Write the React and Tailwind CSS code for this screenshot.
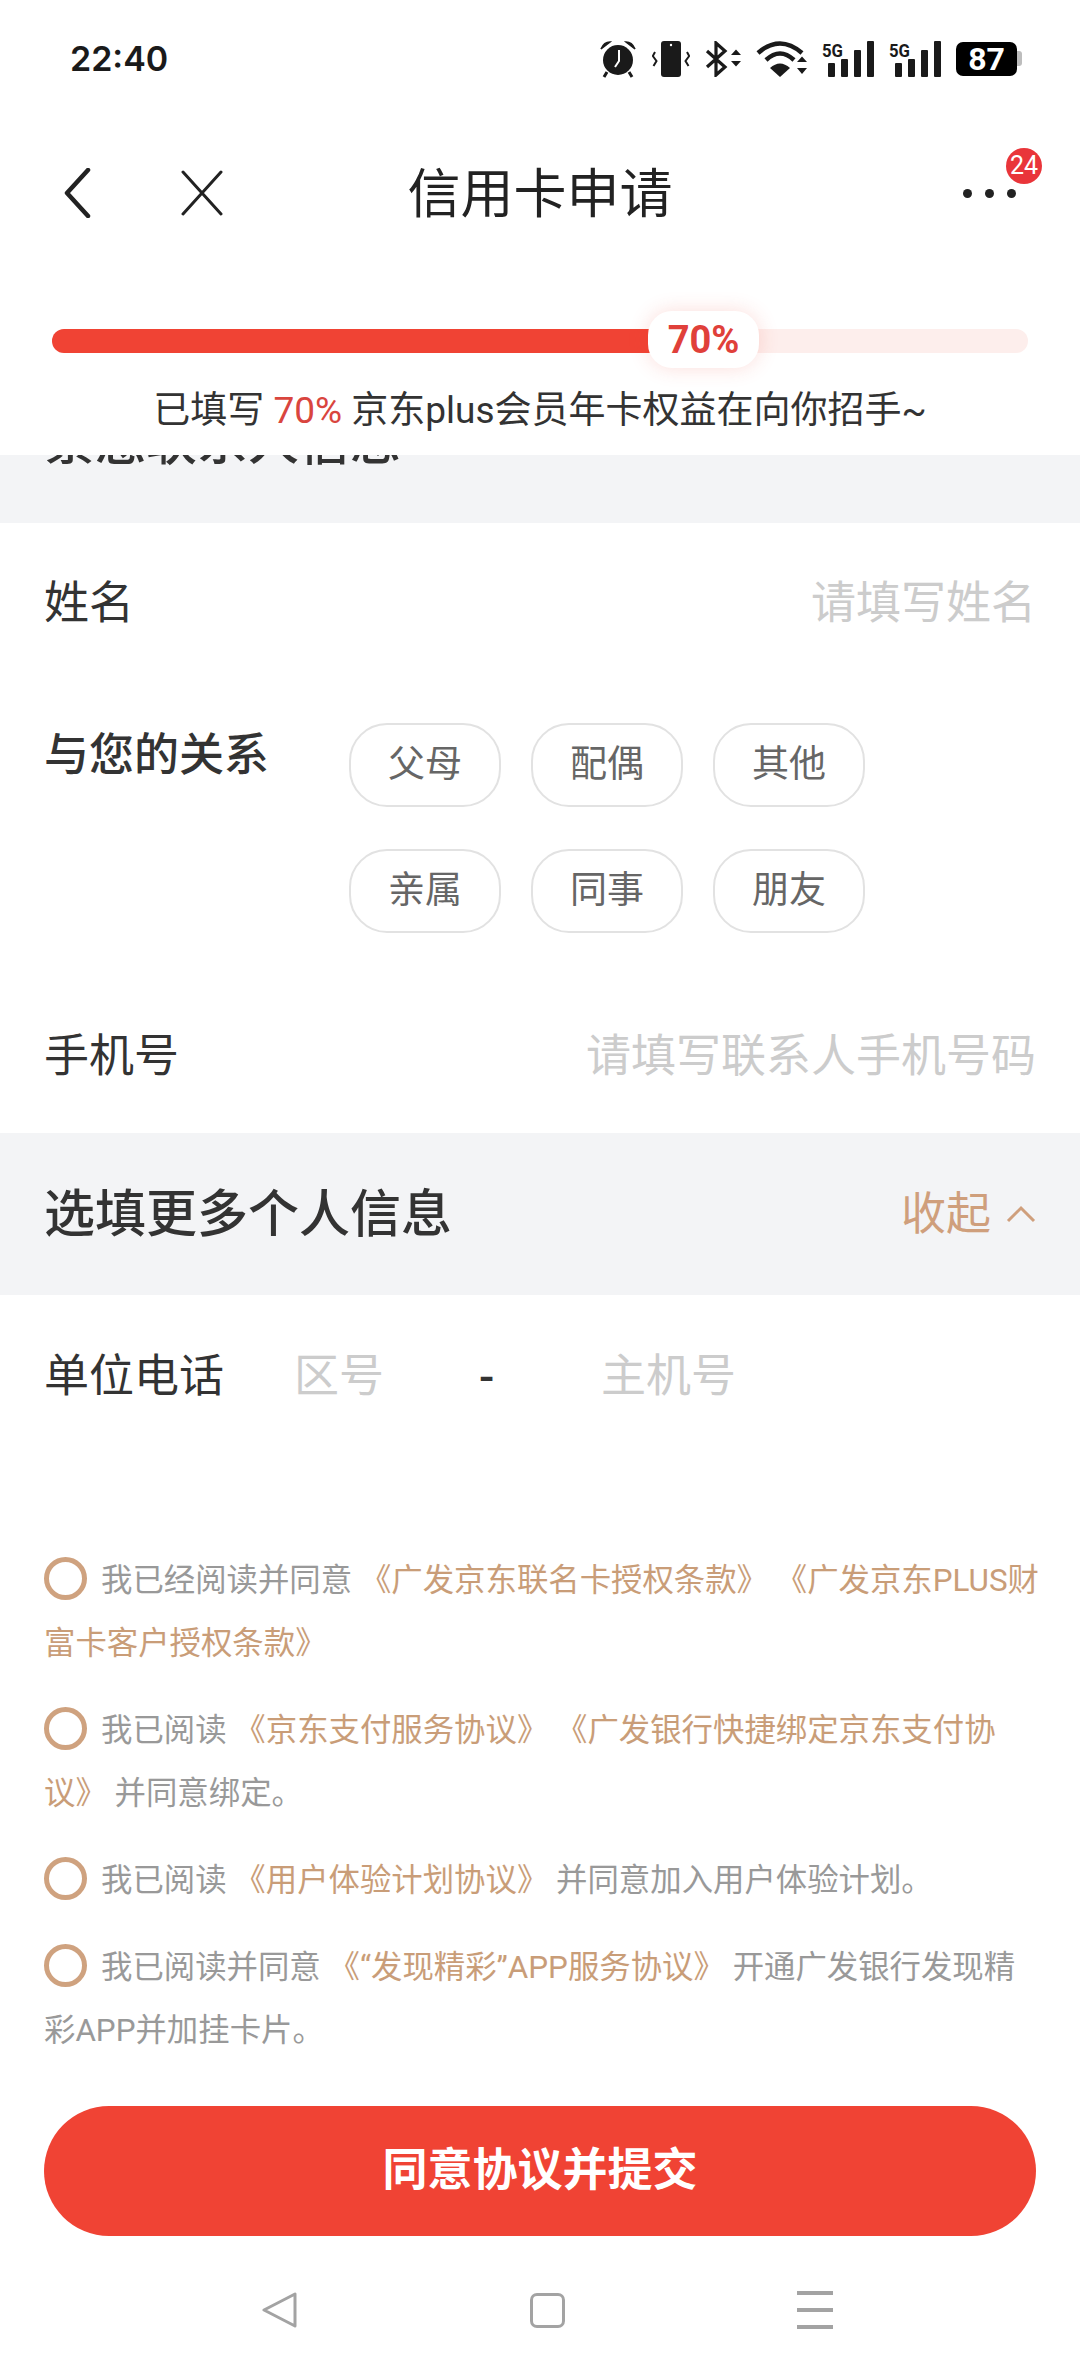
import React from "react";

const relations = ["父母", "配偶", "其他", "亲属", "同事", "朋友"];

function SignalIcon() {
  return (
    <svg width="52" height="36" viewBox="0 0 52 36" className="shrink-0">
      <text x="0" y="16" fontSize="18" fontWeight="700" fill="#1a1a1a" fontFamily="Roboto, sans-serif" textLength="21" lengthAdjust="spacingAndGlyphs">5G</text>
      <rect x="6" y="22" width="7" height="14" rx="1" fill="#1a1a1a" />
      <rect x="19" y="18" width="7" height="18" rx="1" fill="#1a1a1a" />
      <rect x="32" y="9" width="7" height="27" rx="1" fill="#1a1a1a" />
      <rect x="45" y="0" width="7" height="36" rx="1" fill="#1a1a1a" />
    </svg>
  );
}

function StatusBar() {
  return (
    <div className="h-[116px] pt-[1px] pl-[70px] pr-[58px] flex items-center justify-between">
      <span className="text-[34px] font-semibold leading-none text-[#1a1a1a] font-['Inter',sans-serif]">22:40</span>
      <div className="flex items-center gap-[15px]">
        <svg width="38" height="38" viewBox="0 0 38 38">
          <circle cx="19" cy="20" r="15" fill="#1a1a1a" />
          <path d="M2 9 Q5 2 11 2 Z M36 9 Q33 2 27 2 Z" fill="#1a1a1a" stroke="#1a1a1a" strokeWidth="1.5" />
          <path d="M8 32 L5 37 M30 32 L33 37" stroke="#1a1a1a" strokeWidth="3" />
          <path d="M20 10 V21 L16 27" stroke="#fff" strokeWidth="2" fill="none" />
        </svg>
        <svg width="38" height="36" viewBox="0 0 38 36">
          <rect x="9" y="0" width="20" height="36" rx="3" fill="#1a1a1a" />
          <circle cx="19" cy="4" r="1.2" fill="#fff" />
          <path d="M3 11 L0.8 15 L4.5 20 L1.5 25 M35 11 L37.2 15 L33.5 20 L36.5 25" stroke="#1a1a1a" strokeWidth="2" fill="none" />
        </svg>
        <svg width="36" height="36" viewBox="0 0 36 36">
          <path d="M2 10 L20 26 L11 34 V2 L20 10 L2 26" stroke="#1a1a1a" strokeWidth="3.2" fill="none" />
          <path d="M26 14 L31 8.5 L36 14 Z M26 20 L36 20 L31 25.5 Z" fill="#1a1a1a" />
        </svg>
        <svg width="51" height="36" viewBox="0 0 51 36">
          <path d="M2 12 Q24 -7 46 12" stroke="#1a1a1a" strokeWidth="4.5" fill="none" />
          <path d="M10 19 Q24 6 38 19" stroke="#1a1a1a" strokeWidth="4.5" fill="none" />
          <path d="M24 36 L14 27 Q24 18 34 27 Z" fill="#1a1a1a" />
          <path d="M41 21 L46 15.5 L51 21 Z M41 27 L51 27 L46 33 Z" fill="#1a1a1a" />
        </svg>
        <SignalIcon />
        <SignalIcon />
        <div className="flex items-center">
          <div className="w-[61px] h-[34px] rounded-[7px] bg-black text-white text-[32px] font-bold leading-none flex items-center justify-center font-['Roboto',sans-serif]">87</div>
          <div className="w-[5px] h-[15px] rounded-r-[3px] bg-[#bdbdbd]" />
        </div>
      </div>
    </div>
  );
}

function NavBar() {
  return (
    <div className="h-[154px] grid grid-cols-[1fr_auto_1fr] items-center">
      <div className="flex items-center pl-[62px] gap-[87px]">
        <svg width="30" height="50" viewBox="0 0 30 50">
          <path d="M26 2 L5 25 L26 48" stroke="#222" strokeWidth="4.5" fill="none" strokeLinecap="round" strokeLinejoin="round" />
        </svg>
        <svg width="46" height="46" viewBox="0 0 46 46">
          <path d="M4 2 L42 44 M42 2 L4 44" stroke="#222" strokeWidth="3" fill="none" strokeLinecap="round" />
        </svg>
      </div>
      <div className="pt-[5px] text-[53px] leading-none text-[#222]">信用卡申请</div>
      <div className="flex justify-end pr-[64px]">
        <div className="relative flex gap-[13px]">
          <span className="w-[9px] h-[9px] rounded-full bg-[#222]" />
          <span className="w-[9px] h-[9px] rounded-full bg-[#222]" />
          <span className="w-[9px] h-[9px] rounded-full bg-[#222]" />
          <span className="absolute left-[43px] top-[-41px] w-[36px] h-[36px] rounded-full bg-[#e9353a] text-white text-[25px] leading-none flex items-center justify-center">24</span>
        </div>
      </div>
    </div>
  );
}

function Progress() {
  return (
    <div className="px-[52px] pt-[59px]">
      <div className="relative h-[24px] rounded-full bg-[#fdeeec]">
        <div className="w-[600px] h-full rounded-l-full bg-[#f04334]" />
        <div className="absolute left-[596px] top-[-18px] w-[111px] h-[57px] rounded-[24px] bg-white shadow-[0_0_20px_rgba(240,67,52,0.18)] flex items-center justify-center text-[38px] font-bold leading-none text-[#e0403a]">70%</div>
      </div>
      <div className="mt-[33px] text-center text-[37px] leading-[50px] text-[#333] whitespace-nowrap">
        已填写 <span className="text-[#d9453e]">70%</span> 京东plus会员年卡权益在向你招手~
      </div>
    </div>
  );
}

function SectionBar({ title, children, className }) {
  return (
    <div className={`h-[162px] bg-[#f3f4f6] pl-[44px] pr-[44px] flex items-center justify-between ${className || ""}`}>
      <span className="text-[51px] font-medium leading-none text-[#333]">{title}</span>
      {children}
    </div>
  );
}

function Row({ label, placeholder }) {
  return (
    <div className="flex items-center justify-between px-[44px]">
      <span className="text-[45px] leading-none text-[#333]">{label}</span>
      <span className="text-[45px] leading-none text-[#cccccc]">{placeholder}</span>
    </div>
  );
}

function Agreement({ children, className }) {
  return (
    <p className={`text-[31.4px] leading-[63px] text-[#999] ${className || ""}`}>
      <span className="inline-block align-[-9px] w-[43px] h-[43px] mr-[14px] rounded-full border-[5px] border-[#cfa27f]" />
      {children}
    </p>
  );
}

function Gold({ children }) {
  return <span className="text-[#c99d78]">{children}</span>;
}

export default function App() {
  return (
    <div className="h-[2376px] w-[1080px] overflow-hidden bg-white flex flex-col font-['Roboto','Noto_Sans_CJK_SC',sans-serif]">
      <div className="relative z-10 h-[455px] shrink-0 bg-white">
        <StatusBar />
        <NavBar />
        <Progress />
      </div>

      <SectionBar title="紧急联系人信息" className="mt-[-94px] shrink-0" />

      <div className="pt-[58px]">
        <Row label="姓名" placeholder="请填写姓名" />

        <div className="mt-[97px] flex pl-[44px]">
          <span className="w-[305px] pt-[3px] text-[45px] leading-[60px] font-medium text-[#333]">与您的关系</span>
          <div className="grid grid-cols-[152px_152px_152px] gap-x-[30px] gap-y-[42px]">
            {relations.map((r) => (
              <div key={r} className="h-[84px] rounded-[38px] border-2 border-[#e2e2e2] flex items-center justify-center text-[37px] text-[#666]">
                {r}
              </div>
            ))}
          </div>
        </div>

        <div className="mt-[101px] mb-[54px]">
          <Row label="手机号" placeholder="请填写联系人手机号码" />
        </div>
      </div>

      <SectionBar title="选填更多个人信息" className="shrink-0">
        <div className="flex items-center gap-[15px] text-[45px] leading-none text-[#cf9f7c]">
          收起
          <svg width="30" height="18" viewBox="0 0 30 18">
            <path d="M2 16 L15 3 L28 16" stroke="#cf9f7c" strokeWidth="3" fill="none" />
          </svg>
        </div>
      </SectionBar>

      <div className="mt-[60px] pl-[44px] flex items-center text-[45px] leading-[44px]">
        <span className="w-[250px] text-[#333]">单位电话</span>
        <span className="w-[185px] text-[#cccccc]">区号</span>
        <span className="w-[122px] text-[#333] font-medium">-</span>
        <span className="text-[#cccccc]">主机号</span>
      </div>

      <div className="mt-[150px] pl-[44px] pr-[40px] flex flex-col gap-[24px]">
        <Agreement>
          我已经阅读并同意 <Gold>《广发京东联名卡授权条款》 《广发京东PLUS财富卡客户授权条款》</Gold>
        </Agreement>
        <Agreement>
          我已阅读 <Gold>《京东支付服务协议》 《广发银行快捷绑定京东支付协议》</Gold> 并同意绑定。
        </Agreement>
        <Agreement>
          我已阅读 <Gold>《用户体验计划协议》</Gold> 并同意加入用户体验计划。
        </Agreement>
        <Agreement>
          我已阅读并同意 <Gold>《“发现精彩”APP服务协议》</Gold> 开通广发银行发现精彩APP并加挂卡片。
        </Agreement>
      </div>

      <div className="mt-auto px-[44px]">
        <div className="h-[130px] pb-[1px] rounded-full bg-[#f04334] flex items-center justify-center text-[45px] font-bold text-white">
          同意协议并提交
        </div>
      </div>

      <div className="h-[140px] pt-[8px] shrink-0 pl-[262px] pr-[247px] flex items-center justify-between">
        <svg width="36" height="36" viewBox="0 0 36 36">
          <path d="M33 2 V34 L2 18 Z" stroke="#a3a3a3" strokeWidth="3" fill="none" strokeLinejoin="round" />
        </svg>
        <div className="w-[35px] h-[35px] rounded-[7px] border-[3px] border-[#a3a3a3]" />
        <div className="w-[36px] flex flex-col gap-[13px]">
          <div className="h-[4px] bg-[#a3a3a3]" />
          <div className="h-[4px] bg-[#a3a3a3]" />
          <div className="h-[4px] bg-[#a3a3a3]" />
        </div>
      </div>
    </div>
  );
}
